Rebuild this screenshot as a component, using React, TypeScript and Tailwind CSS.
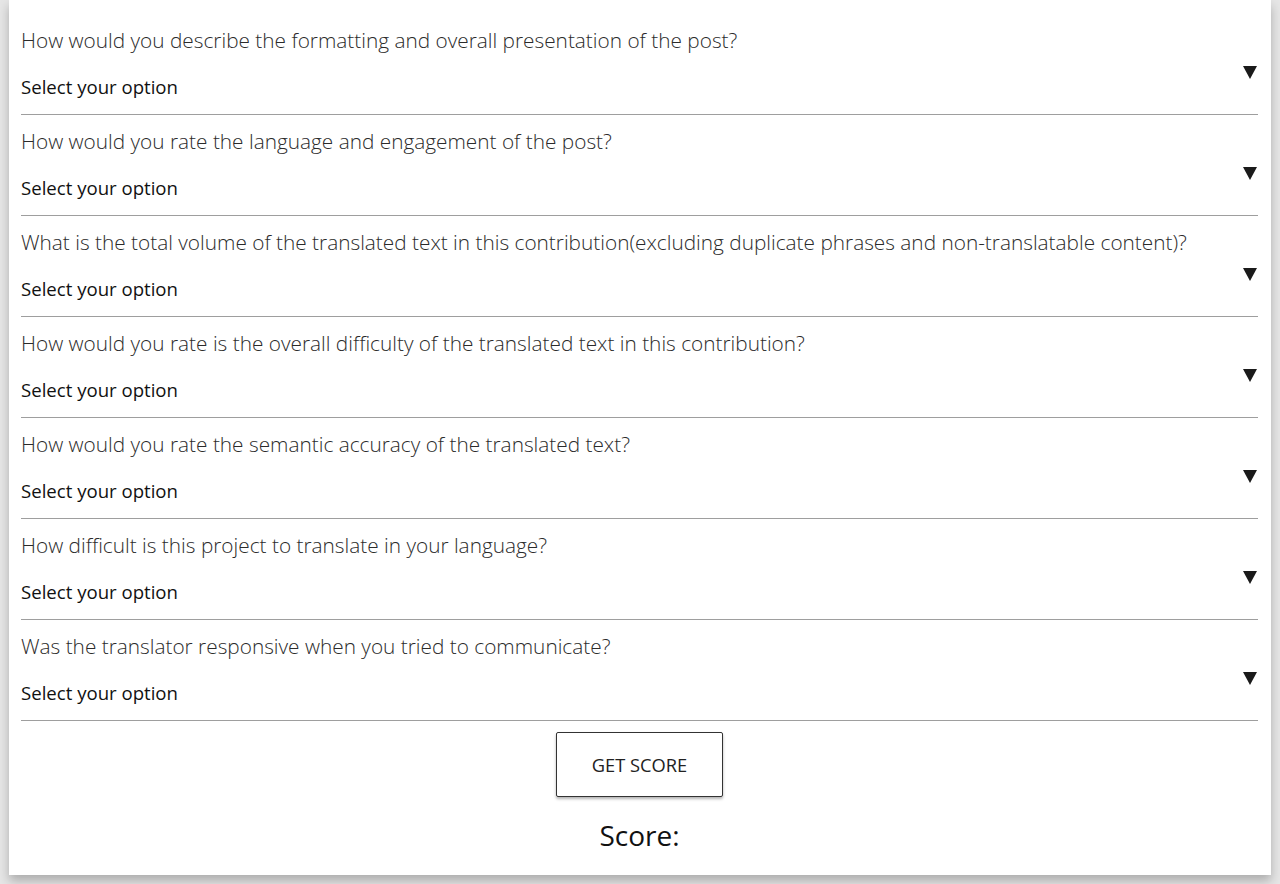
const questions = [
  "How would you describe the formatting and overall presentation of the post?",
  "How would you rate the language and engagement of the post?",
  "What is the total volume of the translated text in this contribution(excluding duplicate phrases and non-translatable content)?",
  "How would you rate is the overall difficulty of the translated text in this contribution?",
  "How would you rate the semantic accuracy of the translated text?",
  "How difficult is this project to translate in your language?",
  "Was the translator responsive when you tried to communicate?",
];

function QuestionRow({ text }: { text: string }) {
  return (
    <div className="flex h-[101px] flex-col border-b border-[#9e9e9e]">
      <div className="mt-[13px] h-[26px] text-[20.8px] leading-[26px] font-light text-[#2b2b2b]">{text}</div>
      <div className="flex flex-1 items-start justify-between">
        <span className="mt-[22px] text-[18.6px] leading-[24px] text-[#111]">Select your option</span>
        <svg width="14" height="13" viewBox="0 0 14 13" className="mt-[13px] mr-[1px]">
          <path d="M0 0 H14 L7 13 Z" fill="#1a1a1a" />
        </svg>
      </div>
    </div>
  );
}

export default function App(): React.JSX.Element {
  return (
    <div
      className="min-h-[884px] bg-[#e6e6e6] px-[9px] pb-[10px]"
      style={{ fontFamily: '"Open Sans", "Noto Sans", sans-serif' }}
    >
      <div className="bg-white pt-[14px] pl-[12px] pr-[13px] pb-[22px] shadow-[0_6px_10px_rgba(0,0,0,0.25)]">
        {questions.map((q) => (
          <QuestionRow key={q} text={q} />
        ))}
        <div className="flex flex-col items-center">
          <button className="mt-[11px] h-[65px] w-[167px] rounded-[2px] border border-[#333] bg-white text-[18.3px] text-[#222] shadow-[0_2px_3px_rgba(0,0,0,0.3)]">
            GET SCORE
          </button>
          <div className="mt-[20px] text-[28px] leading-[36px] text-[#111]">Score:</div>
        </div>
      </div>
    </div>
  );
}
